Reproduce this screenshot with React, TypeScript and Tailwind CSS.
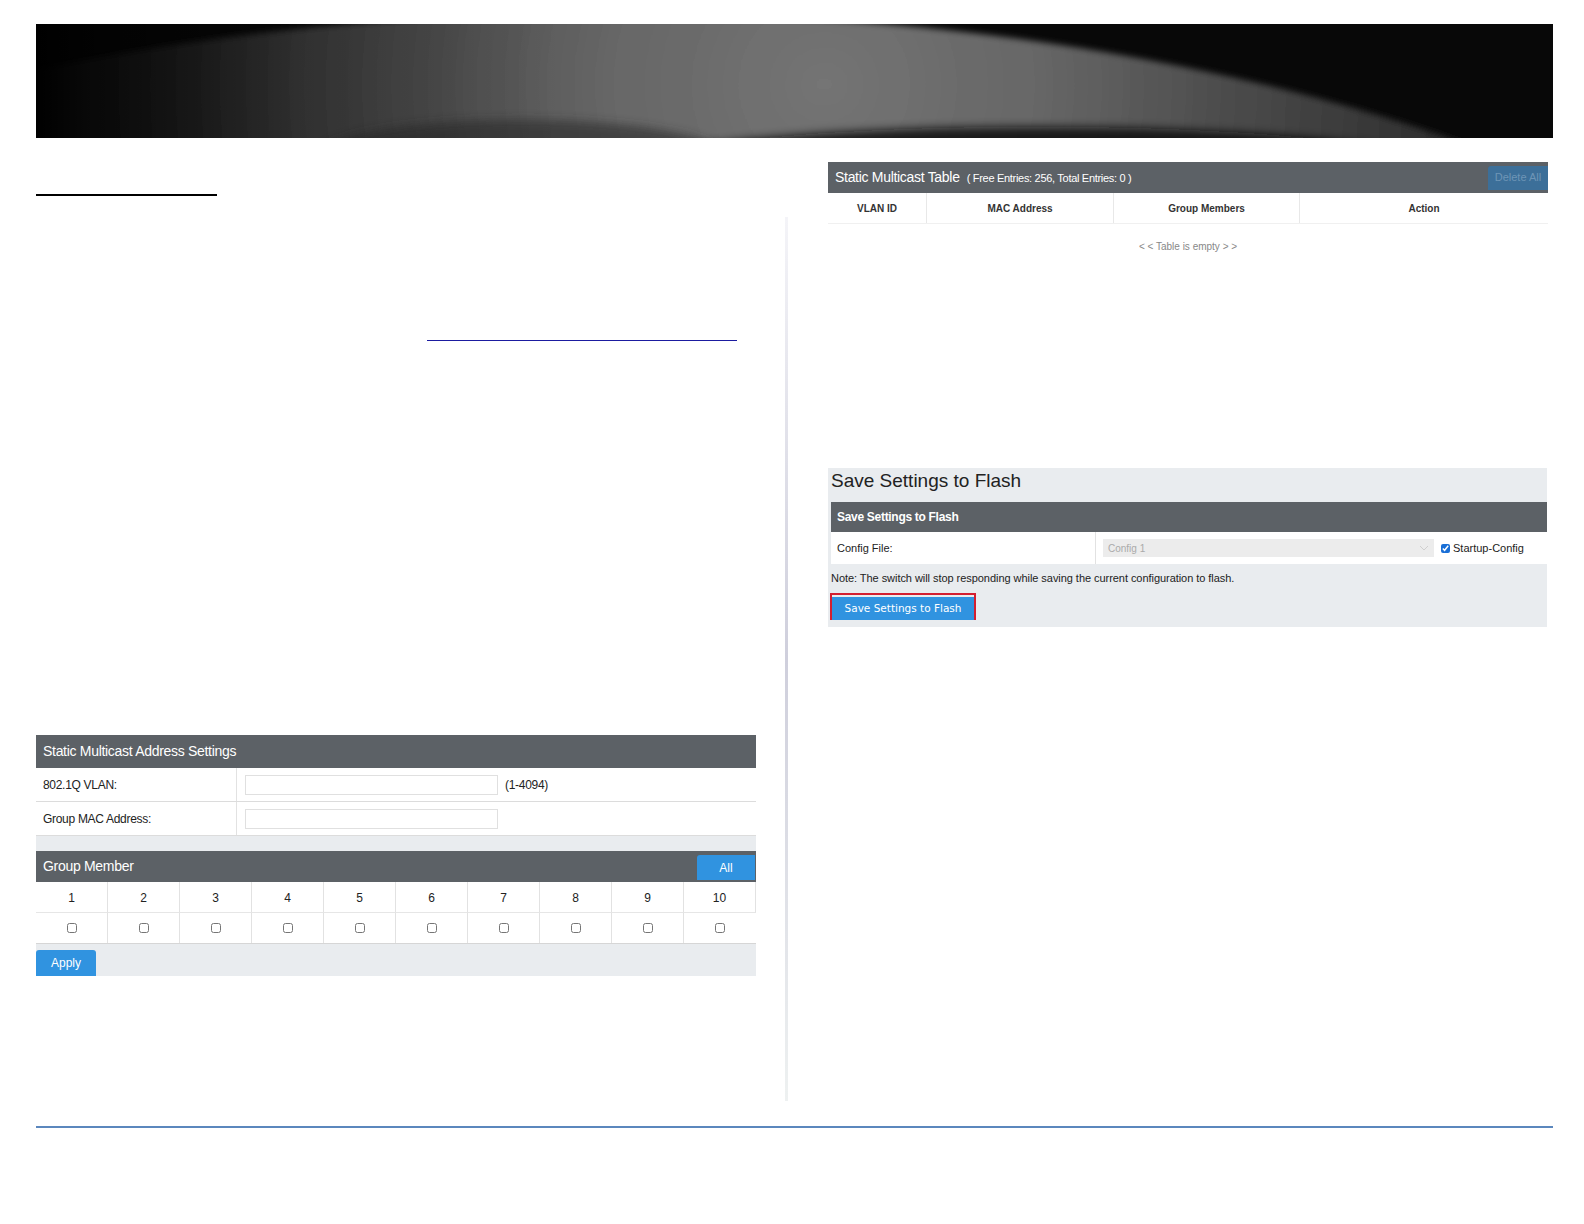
import { useState } from 'react';

// Banner artwork drawn as svg (it is a picture in the reference)
function Banner() {
  return (
    <svg viewBox="0 0 1501 113" preserveAspectRatio="none" className="block w-full h-full">
      <defs>
        <radialGradient id="glow" gradientUnits="userSpaceOnUse" cx="780" cy="60" r="720">
          <stop offset="0" stopColor="#747474" />
          <stop offset="0.3" stopColor="#666666" />
          <stop offset="0.55" stopColor="#4c4c4c" />
          <stop offset="0.8" stopColor="#333333" />
          <stop offset="1" stopColor="#1c1c1c" />
        </radialGradient>
        <linearGradient id="leftfade" x1="0" x2="1" y1="0" y2="0">
          <stop offset="0" stopColor="#000" stopOpacity="1" />
          <stop offset="0.1" stopColor="#000" stopOpacity="0.7" />
          <stop offset="0.5" stopColor="#000" stopOpacity="0.2" />
          <stop offset="1" stopColor="#000" stopOpacity="0" />
        </linearGradient>
        <filter id="edge" x="-5%" y="-5%" width="110%" height="110%">
          <feGaussianBlur stdDeviation="3" />
        </filter>
        <filter id="blurbig" x="-30%" y="-100%" width="160%" height="300%">
          <feGaussianBlur stdDeviation="5" />
        </filter>
      </defs>
      <rect width="1501" height="113" fill="#080808" />
      <ellipse cx="575" cy="600" rx="1360" ry="612" fill="url(#glow)" filter="url(#edge)" />
      <ellipse cx="990" cy="152" rx="430" ry="50" fill="#111111" opacity="0.85" filter="url(#blurbig)" />
      <ellipse cx="480" cy="130" rx="200" ry="35" fill="#2a2a2a" opacity="0.6" filter="url(#blurbig)" />
      <rect width="520" height="113" fill="url(#leftfade)" />
    </svg>
  );
}

function Box({ checked = false }: { checked?: boolean }) {
  return (
    <input
      type="checkbox"
      defaultChecked={checked}
      className="w-[10px] h-[10px] m-0 accent-[#1a73e8]"
    />
  );
}

function AddressSettings() {
  const ports = [1, 2, 3, 4, 5, 6, 7, 8, 9, 10];
  return (
    <div className="bg-[#e9ecef] text-[12px] text-[#222]">
      <div className="h-[33px] bg-[#5c6166] text-white text-[14px] flex items-center pl-[7px] tracking-[-0.3px]">
        Static Multicast Address Settings
      </div>
      <div className="bg-white">
        <div className="flex h-[34px] border-b border-[#dcdcdc]">
          <div className="w-[201px] border-r border-[#e2e2e2] flex items-center pl-[7px] tracking-[-0.3px]">802.1Q VLAN:</div>
          <div className="flex items-center pl-[8px] gap-[7px]">
            <div className="w-[253px] h-[20px] border border-[#e0e0e0] bg-white" />
            <span className="tracking-[-0.3px]">(1-4094)</span>
          </div>
        </div>
        <div className="flex h-[34px] border-b border-[#dcdcdc]">
          <div className="w-[201px] border-r border-[#e2e2e2] flex items-center pl-[7px] tracking-[-0.3px]">Group MAC Address:</div>
          <div className="flex items-center pl-[8px]">
            <div className="w-[253px] h-[20px] border border-[#e0e0e0] bg-white" />
          </div>
        </div>
      </div>
      <div className="h-[15px]" />
      <div className="h-[31px] bg-[#5c6166] text-white text-[14px] flex items-center justify-between pl-[7px]">
        <span className="tracking-[-0.3px]">Group Member</span>
        <button className="self-end mb-[2px] mr-[1px] w-[58px] h-[25px] bg-[#3093e0] rounded-tl-[3px] text-[12px] text-white flex items-center justify-center">
          All
        </button>
      </div>
      <div className="bg-white grid grid-cols-10 border-b border-[#d6d6d6]">
        {ports.map(p => (
          <div key={p} className="h-[31px] pt-[1px] flex items-center justify-center border-r border-[#e2e2e2] border-b border-b-[#e6e6e6] last:border-r-0">
            {p}
          </div>
        ))}
        {ports.map(p => (
          <div key={'c' + p} className="h-[30px] flex items-center justify-center border-r border-[#e2e2e2] last:border-r-0">
            <Box />
          </div>
        ))}
      </div>
      <div className="h-[32px] pt-[6px]">
        <button className="w-[60px] h-[26px] bg-[#3093e0] text-white text-[12px] rounded-t-[3px] flex items-center justify-center">
          Apply
        </button>
      </div>
    </div>
  );
}

function MulticastTable() {
  const cols = [
    { name: 'VLAN ID', w: 'w-[99px]' },
    { name: 'MAC Address', w: 'w-[187px]' },
    { name: 'Group Members', w: 'w-[186px]' },
    { name: 'Action', w: 'flex-1' },
  ];
  return (
    <div className="text-[#333]">
      <div className="h-[31px] bg-[#5c6166] flex items-center justify-between pl-[7px]">
        <div className="flex items-baseline gap-[7px] text-white">
          <span className="text-[14px] tracking-[-0.3px]">Static Multicast Table</span>
          <span className="text-[11px] tracking-[-0.3px]">( Free Entries: 256, Total Entries: 0 )</span>
        </div>
        <button className="w-[60px] h-[24px] bg-[#3c6f99] text-[#6e95b6] text-[11px] rounded-tl-[3px]">Delete All</button>
      </div>
      <div className="flex h-[31px] border-b border-[#f0f0f0] text-[10px] font-bold">
        {cols.map((c, i) => (
          <div key={c.name} className={`${c.w} flex items-center justify-center ${i < 3 ? 'border-r border-[#e8e8e8]' : ''}`}>
            {c.name}
          </div>
        ))}
      </div>
      <div className="h-[44px] flex items-center justify-center text-[10px] text-[#888]">
        {'< < Table is empty > >'}
      </div>
    </div>
  );
}

function SaveSettings() {
  const [startup, setStartup] = useState(true);
  return (
    <div className="bg-[#e9ecef] pl-[3px] pb-[7px] text-[#222]">
      <div className="h-[34px] pb-[8px] text-[19px] flex items-center">Save Settings to Flash</div>
      <div className="h-[30px] bg-[#5c6166] text-white text-[12px] font-bold flex items-center pl-[6px] tracking-[-0.3px]">
        Save Settings to Flash
      </div>
      <div className="flex h-[32px] bg-white text-[11px]">
        <div className="w-[265px] border-r border-[#e2e2e2] flex items-center pl-[6px]">Config File:</div>
        <div className="flex items-center pl-[7px] gap-[7px]">
          <div className="w-[331px] h-[18px] bg-[#ececec] flex items-center justify-between px-[5px] text-[10px] text-[#aaa]">
            <span>Config 1</span>
            <svg width="10" height="6" viewBox="0 0 10 6" fill="none" stroke="#cfcfcf" strokeWidth="1">
              <path d="M1 1l4 4 4-4" />
            </svg>
          </div>
          <label className="flex items-center gap-[3px]">
            <input
              type="checkbox"
              checked={startup}
              onChange={e => setStartup(e.target.checked)}
              className="w-[9px] h-[9px] m-0 accent-[#1a6fd6]"
            />
            <span>Startup-Config</span>
          </label>
        </div>
      </div>
      <div className="h-[29px] flex items-center text-[11px] tracking-[-0.05px]">
        Note: The switch will stop responding while saving the current configuration to flash.
      </div>
      <div className="-ml-[1px] w-[146px] h-[27px] border-2 border-[#d41f30]">
        <button className="w-full h-full bg-[#3093e0] text-white text-[10.5px] font-['DejaVu_Sans',sans-serif]">
          Save Settings to Flash
        </button>
      </div>
    </div>
  );
}

export default function App() {
  return (
    <div className="w-full h-[1224px] overflow-hidden bg-white font-['Liberation_Sans',Arial,sans-serif] pt-[24px] pl-[36px]">
      <div className="h-[114px] w-[1517px]">
        <Banner />
      </div>

      <div className="flex h-[988px]">
        {/* left column */}
        <div className="w-[720px] flex flex-col">
          <div className="mt-[56px] w-[181px] h-[2px] bg-black" />
          <div className="mt-[144px] ml-[391px] w-[310px] h-[1px] bg-[#1b1ba0]" />
          <div className="mt-[394px]">
            <AddressSettings />
          </div>
        </div>

        {/* separator */}
        <div className="ml-[29px] mt-[79px] w-[3px] h-[884px] bg-gradient-to-b from-[#f4f4f8] via-[#cfcfdc] to-[#eef1f1]" />

        {/* right column */}
        <div className="ml-[40px] w-[720px] flex flex-col">
          <div className="mt-[24px]">
            <MulticastTable />
          </div>
          <div className="mt-[200px] w-[719px]">
            <SaveSettings />
          </div>
        </div>
      </div>

      <div className="w-[1517px] h-[2px] bg-[#5b87bd]" />
    </div>
  );
}
